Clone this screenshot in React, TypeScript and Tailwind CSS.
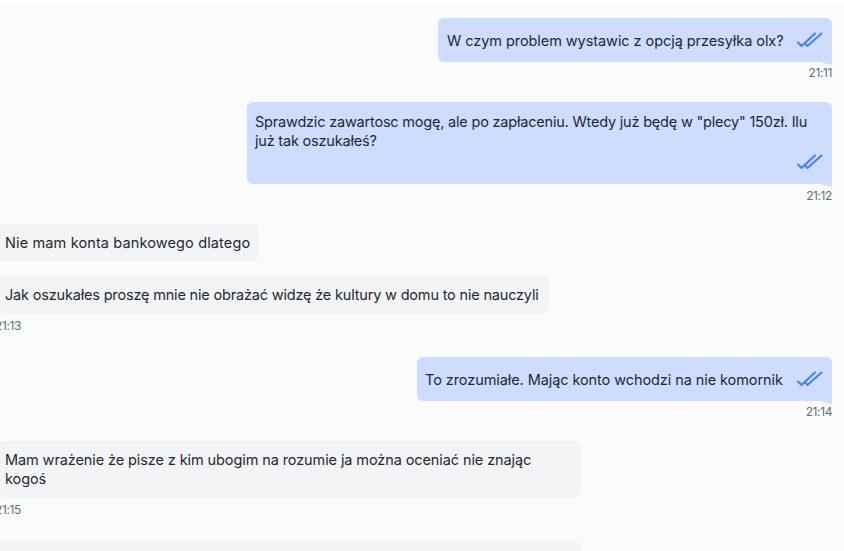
function Check() {
  return (
    <svg width="26" height="18" viewBox="0 0 26 18" fill="none" stroke="#4580f2" strokeWidth="2" strokeLinecap="round" strokeLinejoin="round" className="shrink-0">
      <path d="M1 11.5L4.5 15L18 2.5" />
      <path d="M8.5 13L10.5 15L24.5 2.5" />
    </svg>
  );
}

function Tail({ side }: { side: "left" | "right" }) {
  return side === "right" ? (
    <span className="absolute right-0 top-full h-[3px] w-[12px] bg-[#cddcff] [clip-path:polygon(0_0,100%_0,100%_100%)]" />
  ) : (
    <span className="absolute left-0 top-full h-[3px] w-[12px] bg-[#f3f4f6] [clip-path:polygon(0_0,100%_0,0_100%)]" />
  );
}

function Time({ t, left, className }: { t: string; left?: boolean; className?: string }) {
  return (
    <div className={`shrink-0 text-[12px] leading-[14px] tracking-[-0.4px] text-[#5f7070] ${left ? "self-start -ml-[5px]" : "self-end"} ${className ?? ""}`}>
      {t}
    </div>
  );
}

export default function App() {
  return (
    <div className="h-[551px] w-[844px] overflow-hidden bg-white pt-[6px] text-[14.5px] leading-[19px] text-[#1c2a33] [font-family:Inter,'Noto_Sans',sans-serif]">
      <div className="flex h-full flex-col bg-[#fafcfc] pr-[12px] pt-[12px]">
        <div className="relative flex h-[44px] w-[394px] shrink-0 items-center justify-between self-end rounded-t-[6px] rounded-bl-[6px] bg-[#cddcff] pl-[9px] pr-[9px]">
          <span className="whitespace-nowrap tracking-[-0.065px]">W czym problem wystawic z opcją przesyłka olx?</span>
          <Check />
          <Tail side="right" />
        </div>
        <Time t="21:11" className="mt-[4px]" />

        <div className="relative mt-[22px] h-[82px] w-[585px] shrink-0 self-end rounded-t-[6px] rounded-bl-[6px] bg-[#cddcff] pl-[8px] pr-[9px] pt-[10px]">
          <p className="whitespace-nowrap tracking-[-0.2px]">Sprawdzic zawartosc mogę, ale po zapłaceniu. Wtedy już będę w "plecy" 150zł. Ilu<br />już tak oszukałeś?</p>
          <div className="mt-[3px] flex justify-end"><Check /></div>
          <Tail side="right" />
        </div>
        <Time t="21:12" className="mt-[5px]" />

        <div className="-ml-[4px] mt-[21px] flex h-[37px] w-[263px] shrink-0 items-center rounded-[6px] bg-[#f3f4f6] pl-[9px]">
          <span className="whitespace-nowrap tracking-[0.13px]">Nie mam konta bankowego dlatego</span>
        </div>
        <div className="relative -ml-[4px] mt-[15px] flex h-[37px] w-[553px] shrink-0 items-center rounded-t-[6px] rounded-br-[6px] bg-[#f3f4f6] pl-[9px]">
          <span className="whitespace-nowrap tracking-[-0.18px]">Jak oszukałes proszę mnie nie obrażać widzę że kultury w domu to nie nauczyli</span>
          <Tail side="left" />
        </div>
        <Time t="21:13" left className="mt-[6px]" />

        <div className="relative mt-[24px] flex h-[44px] w-[415px] shrink-0 items-center justify-between self-end rounded-t-[6px] rounded-bl-[6px] bg-[#cddcff] pl-[8px] pr-[9px]">
          <span className="whitespace-nowrap tracking-[-0.08px]">To zrozumiałe. Mając konto wchodzi na nie komornik</span>
          <Check />
          <Tail side="right" />
        </div>
        <Time t="21:14" className="mt-[4px]" />

        <div className="relative -ml-[4px] mt-[22px] h-[56px] w-[585px] shrink-0 rounded-t-[6px] rounded-br-[6px] bg-[#f3f4f6] pl-[9px] pr-[30px] pt-[9px] tracking-[-0.1px]">
          Mam wrażenie że pisze z kim ubogim na rozumie ja można oceniać nie znając<br />kogoś
          <Tail side="left" />
        </div>
        <Time t="21:15" left className="mt-[6px]" />

        <div className="-ml-[4px] mt-[24px] h-[40px] w-[585px] shrink-0 rounded-t-[6px] bg-[#f3f4f6]" />
      </div>
    </div>
  );
}
